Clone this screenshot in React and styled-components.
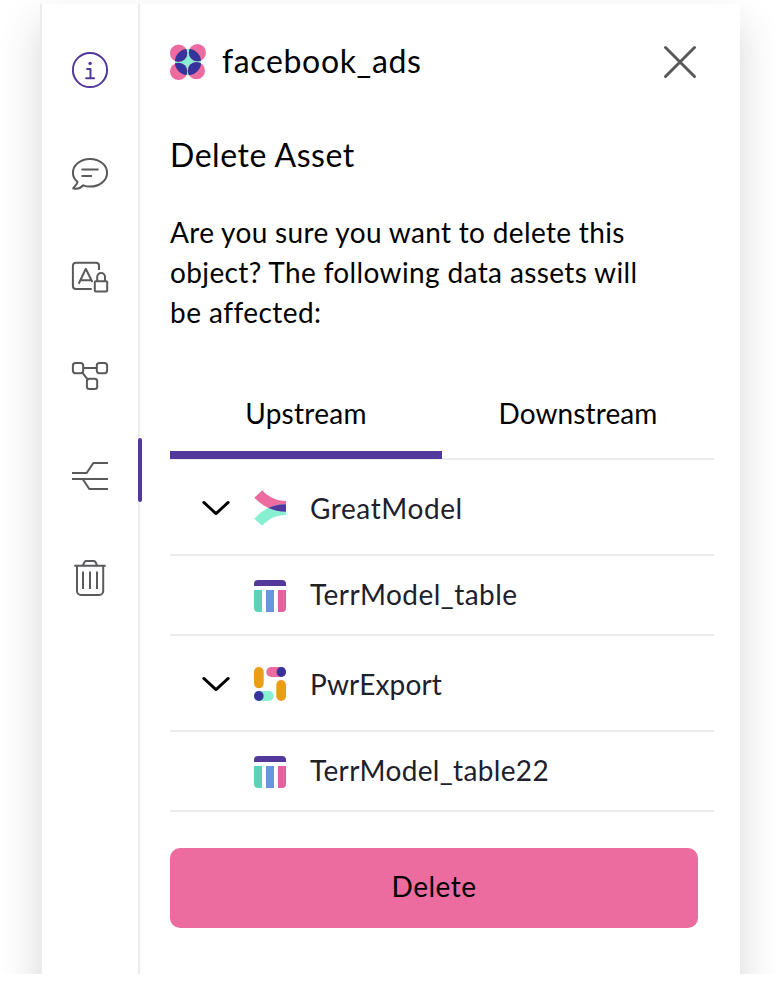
import React from "react";
import styled, { createGlobalStyle } from "styled-components";

const GlobalStyle = createGlobalStyle`
  *, *::before, *::after { box-sizing: border-box; }
  body { margin: 0; background: #fff; font-family: Lato, "Open Sans", sans-serif; color: #000; }
`;

const Viewport = styled.div`
  height: 974px;
  width: 776px;
  padding: 4px 36px 0 40px;
  overflow: hidden;
`;

const Panel = styled.section`
  display: flex;
  width: 700px;
  height: 1040px;
  background: #fff;
  border-left: 2px solid #ececec;
  box-shadow: 0 20px 40px rgba(0, 0, 0, 0.16);
`;

const Sidebar = styled.nav`
  display: flex;
  flex-direction: column;
  width: 98px;
  padding-top: 46px;
  border-right: 2px solid #ececec;
`;

const SideItem = styled.button`
  position: relative;
  display: flex;
  justify-content: center;
  width: 96px;
  height: 40px;
  margin: 0 0 ${(p) => p.$gap}px;
  padding: 0;
  border: 0;
  background: none;
  color: ${(p) => (p.$accent ? "#53389b" : "#5a5a5c")};
`;

const ActiveMark = styled.span`
  position: absolute;
  top: -18px;
  right: -4px;
  width: 4px;
  height: 64px;
  border-radius: 2px;
  background: #53389b;
`;

const LineIcon = styled.svg`
  display: block;
  width: 40px;
  height: 40px;
  fill: none;
  stroke: currentColor;
  stroke-width: 2;
  stroke-linecap: ${(p) => p.$cap || "round"};
  stroke-linejoin: round;
`;

const Content = styled.main`
  display: flex;
  flex-direction: column;
  width: 574px;
  margin-left: 30px;
`;

const Header = styled.header`
  display: flex;
  align-items: center;
  width: 528px;
  height: 40px;
  margin-top: 38px;
`;

const Logo = styled.svg`
  width: 36px;
  height: 36px;
  margin-right: 16px;
`;

const Title = styled.h1`
  flex: 1;
  margin: 0;
  padding-bottom: 2px;
  font-size: 32px;
  line-height: 38px;
  font-weight: 400;
  letter-spacing: 0.65px;
`;

const CloseButton = styled.button`
  display: flex;
  width: 36px;
  height: 36px;
  padding: 0;
  border: 0;
  background: none;
  color: #58585a;
`;

const CloseIcon = styled.svg`
  width: 36px;
  height: 36px;
  fill: none;
  stroke: currentColor;
  stroke-width: 3;
  stroke-linecap: round;
`;

const Heading = styled.h2`
  margin: 53px 0 0;
  font-size: 32px;
  line-height: 40px;
  font-weight: 400;
  letter-spacing: 0.53px;
`;

const Message = styled.p`
  display: flex;
  flex-direction: column;
  margin: 37px 0 0;
  font-size: 28px;
  line-height: 40px;
`;

const MessageLine = styled.span`
  letter-spacing: ${(p) => p.$track}px;
  white-space: nowrap;
`;

const Tabs = styled.div`
  display: grid;
  grid-template-columns: 272px 272px;
  width: 544px;
  height: 88px;
  margin-top: 40px;
  box-shadow: inset 0 -2px #ececec;
`;

const Tab = styled.button`
  height: 87px;
  padding: 2px 0 0;
  border: 0;
  border-bottom: 8px solid ${(p) => (p.$active ? "#53389b" : "transparent")};
  background: none;
  font: 400 28px/40px Lato, "Open Sans", sans-serif;
  letter-spacing: ${(p) => p.$track}px;
  color: #000;
`;

const Row = styled.div`
  display: grid;
  grid-template-columns: 84px 56px 1fr;
  align-items: center;
  width: 544px;
  height: ${(p) => (p.$parent ? 96 : 80)}px;
  padding-top: 2px;
  border-bottom: 2px solid #ececec;
`;

const Chevron = styled.svg`
  width: 28px;
  height: 16px;
  margin-left: 32px;
  fill: none;
  stroke: #000;
  stroke-width: 2.8;
  stroke-linecap: round;
  stroke-linejoin: round;
`;

const AssetIcon = styled.svg`
  display: block;
  width: 32px;
  height: ${(p) => p.$h}px;
  grid-column: 2;
`;

const Name = styled.span`
  padding-bottom: ${(p) => (p.$parent ? 0 : 4)}px;
  font-size: 28px;
  line-height: 40px;
  color: #20202c;
  letter-spacing: ${(p) => p.$track}px;
`;

const DeleteButton = styled.button`
  width: 528px;
  height: 80px;
  margin-top: 36px;
  padding: 0 0 4px;
  border: 0;
  border-radius: 10px;
  background: #ec6ca0;
  color: #000;
  font: 400 28px/40px Lato, "Open Sans", sans-serif;
  letter-spacing: 0.5px;
`;

const InfoIcon = () => (
  <LineIcon viewBox="0 0 40 40">
    <circle cx="20" cy="20" r="17.1" />
    <circle cx="20.1" cy="13.4" r="1.7" fill="currentColor" stroke="none" />
    <path d="M17.1 19h3.4v9.2M16.1 28.2h8" />
  </LineIcon>
);

const CommentIcon = () => (
  <LineIcon viewBox="0 0 40 40">
    <path d="M13.3 31.3C15.3 32.2 17.6 32.6 20 32.6C29.6 32.6 37.1 26.6 37.1 18.8S29.6 4.9 20 4.9S2.9 11 2.9 18.8C2.9 22.2 4.5 25.4 7.4 27.8C7.5 30.6 5.2 31.2 3.2 34.4C6.4 35.4 10.5 34.2 13.3 31.3Z" />
    <path d="M12.2 15.4h15.6M12.2 22.1h9" />
  </LineIcon>
);

const AccessIcon = () => (
  <LineIcon viewBox="0 0 40 40" $cap="butt">
    <path d="M29 14V9.7a3 3 0 0 0-3-3H5.9a3 3 0 0 0-3 3V30a3 3 0 0 0 3 3h15.8" />
    <path d="M8.7 27.7L15.8 12.8L22.3 26M10.7 24.3H21.5" />
    <rect x="24.8" y="25.2" width="12.4" height="10.2" rx="1" />
    <path d="M27.2 25V20.9a3.9 3.9 0 0 1 7.8 0V25" />
  </LineIcon>
);

const GraphIcon = () => (
  <LineIcon viewBox="0 0 40 40">
    <rect x="2.9" y="6.9" width="10.3" height="10.3" rx="2.6" />
    <rect x="26.8" y="6.9" width="10.3" height="10.3" rx="2.6" />
    <rect x="16.9" y="22.8" width="10.3" height="10.3" rx="2.6" />
    <path d="M13.2 12h13.6M12.6 16.8l5 6.6" />
  </LineIcon>
);

const LineageIcon = () => (
  <LineIcon viewBox="0 0 40 40" $cap="butt">
    <path d="M2 17H16.7L23.3 7H38M2 23H38M12.7 23L19.3 33H38" />
  </LineIcon>
);

const TrashIcon = () => (
  <LineIcon viewBox="0 0 40 40" $cap="butt">
    <path d="M4.3 7.7H35.7M13 7.2L14.6 3.9Q15.2 2.9 16.4 2.9H23.6Q24.8 2.9 25.4 3.9L27 7.2" />
    <path d="M7 7.7V33a4 4 0 0 0 4 4H29.2a4 4 0 0 0 4-4V7.7" />
    <path d="M13 13.5V31M20 13.5V31M27 13.5V31" />
  </LineIcon>
);

const BrandLogo = () => (
  <Logo viewBox="0 0 36 36">
    <clipPath id="core"><circle cx="18" cy="18" r="13.2" /></clipPath>
    <circle cx="18" cy="18" r="13.2" fill="#87efd2" />
    {["#ec6ca0", "#36339c"].map((fill, i) => (
      <g key={fill} fill={fill} clipPath={i ? "url(#core)" : undefined}>
        <circle cx="8.6" cy="9.2" r="8.6" />
        <circle cx="27.4" cy="8.7" r="8.6" />
        <circle cx="8.6" cy="27.4" r="8.6" />
        <circle cx="26.4" cy="26.7" r="8.6" />
      </g>
    ))}
  </Logo>
);

const MODEL_TOP = "M8.3.3C14.5 7 22 11 32 11V21.7C19 21.5 8.5 16.5.3 7.7Z";
const MODEL_BOTTOM = "M.3 28.7C8.5 19.5 18.5 14.3 32 14.3V25C22 25 14.5 29 8.3 35.7Z";

const ModelIcon = () => (
  <AssetIcon viewBox="0 0 32 36" $h={36}>
    <clipPath id="model"><path d={MODEL_TOP} /></clipPath>
    <path d={MODEL_TOP} fill="#ec6ca0" />
    <path d={MODEL_BOTTOM} fill="#87efd2" />
    <path d={MODEL_BOTTOM} fill="#53389b" clipPath="url(#model)" />
  </AssetIcon>
);

const TableIcon = () => (
  <AssetIcon viewBox="0 0 32 32" $h={32}>
    <path d="M0 6V4a4 4 0 0 1 4-4h24a4 4 0 0 1 4 4v2Z" fill="#53389b" />
    <path d="M0 10h8v22H4a4 4 0 0 1-4-4Z" fill="#5bd1b7" />
    <path d="M12 10h8v22h-8Z" fill="#6796e0" />
    <path d="M24 10h8v18a4 4 0 0 1-4 4h-4Z" fill="#e6619b" />
  </AssetIcon>
);

const ExportIcon = () => (
  <AssetIcon viewBox="0 0 32 34" $h={34}>
    <rect width="9.7" height="21.3" rx="4.85" fill="#ea9e17" />
    <rect x="22.3" y="13" width="9.7" height="21" rx="4.85" fill="#ea9e17" />
    <rect x="12.3" width="19.7" height="10" rx="5" fill="#ec6ca0" />
    <rect y="24" width="19.7" height="10" rx="5" fill="#87efd2" />
    <ellipse cx="27.3" cy="5" rx="4.7" ry="5" fill="#36339c" />
    <ellipse cx="4.8" cy="29" rx="4.8" ry="5" fill="#36339c" />
  </AssetIcon>
);

const sideItems = [
  { id: "Info", Icon: InfoIcon, gap: 64, accent: true },
  { id: "Comments", Icon: CommentIcon, gap: 62 },
  { id: "Access", Icon: AccessIcon, gap: 60 },
  { id: "Graph", Icon: GraphIcon, gap: 60 },
  { id: "Lineage", Icon: LineageIcon, gap: 62, active: true },
  { id: "Trash", Icon: TrashIcon, gap: 0 },
];

const assets = [
  { name: "GreatModel", Icon: ModelIcon, parent: true, track: 0.58 },
  { name: "TerrModel_table", Icon: TableIcon, track: 0.48 },
  { name: "PwrExport", Icon: ExportIcon, parent: true, track: 0.15 },
  { name: "TerrModel_table22", Icon: TableIcon, track: 0.36 },
];

export default function App() {
  return (
    <>
      <GlobalStyle />
      <Viewport>
        <Panel>
          <Sidebar>
            {sideItems.map(({ id, Icon, gap, accent, active }) => (
              <SideItem key={id} aria-label={id} $gap={gap} $accent={accent}>
                <Icon />
                {active && <ActiveMark />}
              </SideItem>
            ))}
          </Sidebar>
          <Content>
            <Header>
              <BrandLogo />
              <Title>facebook_ads</Title>
              <CloseButton aria-label="Close">
                <CloseIcon viewBox="0 0 36 36">
                  <path d="M3.5 3.5L32.5 32.5M32.5 3.5L3.5 32.5" />
                </CloseIcon>
              </CloseButton>
            </Header>
            <Heading>Delete Asset</Heading>
            <Message>
              <MessageLine $track={0.33}>Are you sure you want to delete this</MessageLine>
              <MessageLine $track={0.37}>object? The following data assets will</MessageLine>
              <MessageLine $track={0.45}>be affected:</MessageLine>
            </Message>
            <Tabs>
              <Tab $active $track={0.28}>Upstream</Tab>
              <Tab $track={0.1}>Downstream</Tab>
            </Tabs>
            {assets.map(({ name, Icon, parent, track }) => (
              <Row key={name} $parent={parent}>
                {parent && (
                  <Chevron viewBox="0 0 28 16">
                    <path d="M1.8 2.4L14 13.6L26.2 2.4" />
                  </Chevron>
                )}
                <Icon />
                <Name $parent={parent} $track={track}>{name}</Name>
              </Row>
            ))}
            <DeleteButton>Delete</DeleteButton>
          </Content>
        </Panel>
      </Viewport>
    </>
  );
}
